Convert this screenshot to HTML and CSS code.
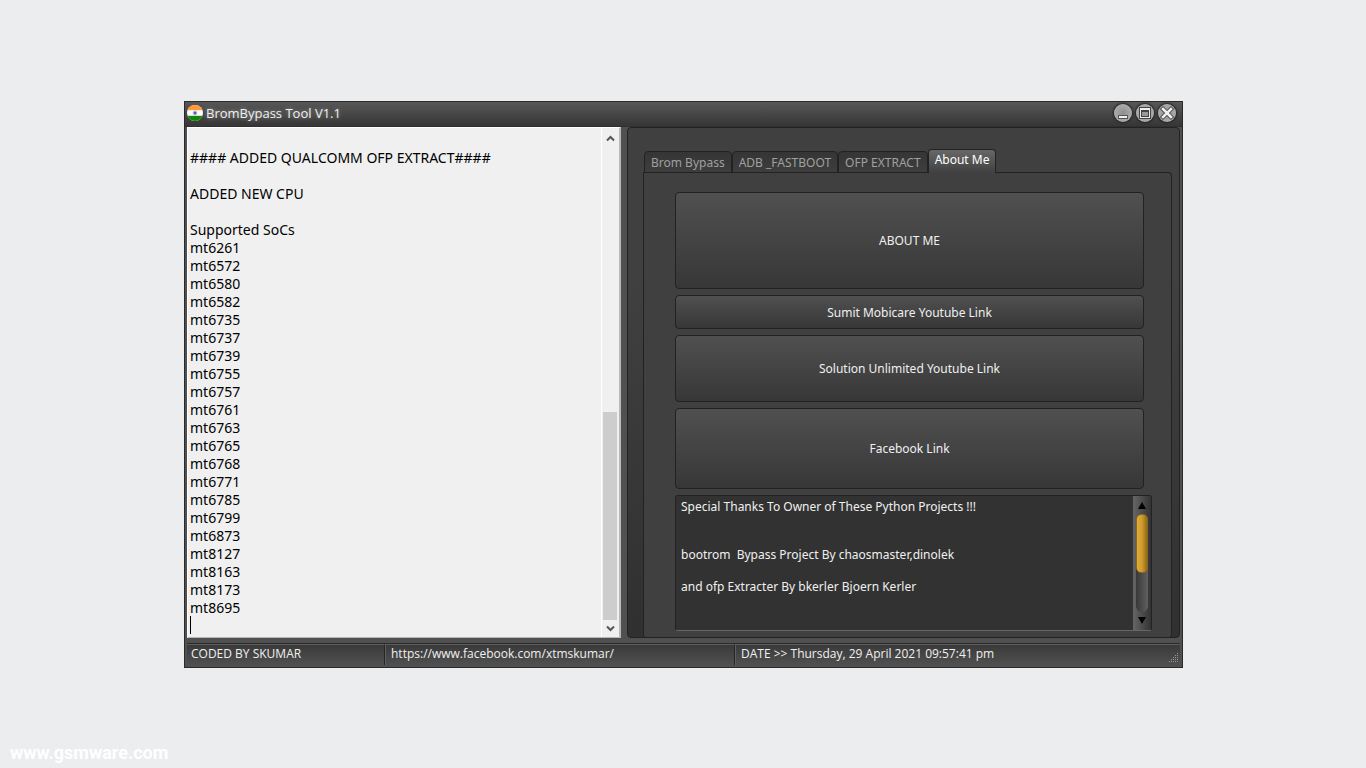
FILE: index.html
```html
<!DOCTYPE html>
<html lang="en">
<head>
<meta charset="utf-8">
<title>BromBypass Tool V1.1</title>
<link rel="stylesheet" href="styles.css">
</head>
<body>
<main class="window">
  <header class="titlebar">
    <svg class="flag" viewBox="0 0 16 16" aria-hidden="true">
      <clipPath id="disc"><circle cx="8" cy="8" r="8"/></clipPath>
      <g clip-path="url(#disc)">
        <rect width="16" height="16" fill="#fff"/>
        <rect width="16" height="5.2" fill="#f93"/>
        <rect y="10.8" width="16" height="5.2" fill="#128807"/>
        <circle cx="8" cy="8" r="2.4" fill="#b9b9dd"/>
        <circle cx="8" cy="8" r="1.300" fill="#5c5ca8"/>
      </g>
    </svg>
    <h1 class="title">BromBypass Tool V1.1</h1>
    <div class="controls">
      <button class="control" type="button" aria-label="Minimize"><svg viewBox="0 0 18 18"><rect x="4.500" y="11.500" width="9" height="3" fill="#f0f0f0" stroke="#555" stroke-width="1"/></svg></button>
      <button class="control" type="button" aria-label="Maximize"><svg viewBox="0 0 18 18"><rect x="3" y="3" width="12" height="12" fill="#444"/><rect x="4" y="4" width="10" height="10" fill="#eee"/><rect x="5" y="6" width="8" height="7" fill="#444"/><rect x="6" y="8" width="6" height="4" fill="#999"/></svg></button>
      <button class="control" type="button" aria-label="Close"><svg viewBox="0 0 18 18"><path d="M5 5l8 8M13 5l-8 8" stroke="#4a4a4a" stroke-width="4.400" stroke-linecap="square"/><path d="M5 5l8 8M13 5l-8 8" stroke="#f0f0f0" stroke-width="2.500" stroke-linecap="square"/></svg></button>
    </div>
  </header>

  <div class="content">
    <section class="log">
      <textarea class="log-text" aria-label="Log" readonly spellcheck="false">

#### ADDED QUALCOMM OFP EXTRACT####

ADDED NEW CPU

Supported SoCs
mt6261
mt6572
mt6580
mt6582
mt6735
mt6737
mt6739
mt6755
mt6757
mt6761
mt6763
mt6765
mt6768
mt6771
mt6785
mt6799
mt6873
mt8127
mt8163
mt8173
mt8695
</textarea>
      <span class="caret"></span>
      <div class="scroll-light">
        <svg viewBox="0 0 9 7"><path d="M1 5.500l3.500-3.500 3.500 3.500" fill="none" stroke="#555" stroke-width="2"/></svg>
        <div class="track-light"><div class="thumb-light"></div></div>
        <svg viewBox="0 0 9 7"><path d="M1 1.500l3.500 3.500 3.500-3.500" fill="none" stroke="#555" stroke-width="2"/></svg>
      </div>
    </section>

    <section class="panel">
      <div class="tabs" role="tablist">
        <button class="tab" type="button" role="tab">Brom Bypass</button>
        <button class="tab" type="button" role="tab">ADB _FASTBOOT</button>
        <button class="tab" type="button" role="tab">OFP EXTRACT</button>
        <button class="tab active" type="button" role="tab" aria-selected="true">About Me</button>
      </div>
      <div class="page" role="tabpanel">
        <div class="actions">
          <button class="action" type="button">ABOUT ME</button>
          <button class="action" type="button">Sumit Mobicare Youtube Link</button>
          <button class="action" type="button">Solution Unlimited Youtube Link</button>
          <button class="action" type="button">Facebook Link</button>
        </div>
        <div class="memo">
          <textarea class="memo-text" aria-label="Credits" readonly spellcheck="false">Special Thanks To Owner of These Python Projects !!!


bootrom  Bypass Project By chaosmaster,dinolek

and ofp Extracter By bkerler Bjoern Kerler
</textarea>
          <div class="scroll-dark">
            <svg viewBox="0 0 8 7"><path d="M4 0l4 7h-8z"/></svg>
            <div class="track-dark"><div class="thumb-dark"></div></div>
            <svg viewBox="0 0 8 7"><path d="M4 7l4-7h-8z"/></svg>
          </div>
        </div>
      </div>
    </section>
  </div>

  <footer class="status">
    <span class="cell">CODED BY SKUMAR</span>
    <span class="cell">https://www.facebook.com/xtmskumar/</span>
    <span class="cell">DATE &gt;&gt; Thursday, 29 April 2021 09:57:41 pm</span>
    <svg class="grip" viewBox="0 0 10 10"><path d="M9.500 0v10M7.500 2v8M5.500 4v6M3.500 6v4M1.500 8v2" stroke="#999" stroke-width="1" stroke-dasharray="1 1"/></svg>
  </footer>
</main>
<span class="watermark">www.gsmware.com</span>
</body>
</html>
```
FILE: styles.css
```css
* {
  box-sizing: border-box;
}

body {
  margin: 0;
  min-height: 100vh;
  padding: 101px 183px 100px 184px;
  display: flex;
  position: relative;
  background: #ebedef;
  font-family: "Noto Sans", sans-serif;
  font-size: 12px;
  color: #f0f0f0;
}

button,
textarea {
  font: inherit;
  color: inherit;
  margin: 0;
}

.window {
  flex: 1;
  display: flex;
  flex-direction: column;
  min-width: 0;
  padding: 0 2px 2px;
  background: #505050;
  border: 1px solid #2a2a2a;
}

.titlebar {
  display: flex;
  align-items: center;
  gap: 3px;
  height: 25px;
  margin: 0 -2px;
  padding: 0 6px 2px 2px;
  background: linear-gradient(#575757, #363636);
  border-bottom: 1px solid #303030;
}

.flag {
  width: 16px;
  height: 16px;
}

.title {
  flex: 1;
  margin: 0;
  font: 13px "Open Sans", sans-serif;
  text-shadow: 0 0 4px #999;
}

.controls {
  display: flex;
  gap: 4px;
}

.control {
  width: 18px;
  height: 18px;
  padding: 0;
  border: 0;
  border-radius: 50%;
  background: radial-gradient(#8f8f8f, #b8b8b8);
  box-shadow: 0 0 2px 1px #222;
}

.control svg {
  display: block;
}

.content {
  flex: 1;
  display: grid;
  grid-template-columns: 434fr 553fr;
  gap: 6px;
  min-height: 0;
}

.log {
  position: relative;
  display: flex;
  background: #f0f0f0;
  border: 1px solid #fff;
  border-right: 2px solid #b9b9b9;
  border-bottom-color: #b9b9b9;
}

.log-text {
  flex: 1;
  min-width: 0;
  padding: 3px 2px;
  border: 0;
  outline: 0;
  resize: none;
  overflow: hidden;
  background: transparent;
  color: #000;
  font-size: 14px;
  line-height: 18px;
}

.caret {
  position: absolute;
  left: 2px;
  bottom: 3px;
  width: 1px;
  height: 18px;
  background: #000;
}

.scroll-light {
  display: flex;
  flex-direction: column;
  align-items: center;
  width: 18px;
  padding: 7px 2px 5px 1px;
  gap: 5px;
  border-left: 1px solid #fff;
}

.scroll-light svg {
  width: 9px;
  height: 7px;
}

.track-light {
  flex: 1;
  align-self: stretch;
  display: flex;
  align-items: flex-end;
}

.thumb-light {
  width: 100%;
  height: 44%;
  background: #cdcdcd;
}

.panel {
  display: flex;
  flex-direction: column;
  min-width: 0;
  padding: 21px 7px 0 15px;
  border: 1px solid #222;
  border-radius: 4px;
  background: linear-gradient(#404040 30%, #303030);
}

.tabs {
  display: flex;
  align-items: flex-end;
  margin: 0 0 -1px 1px;
  z-index: 1;
}

.tab {
  height: 22px;
  padding: 0 6px;
  border: 1px solid #222;
  border-radius: 4px 4px 0 0;
  background: linear-gradient(#353535, #3e3e3e);
  color: #a0a0a0;
  white-space: nowrap;
}

.tab.active {
  height: 24px;
  padding: 0 6px 4px;
  border-bottom: 0;
  background: linear-gradient(#686868, #404040);
  color: #fff;
}

.page {
  flex: 1;
  display: flex;
  flex-direction: column;
  gap: 6px;
  padding: 19px 19px 6px 31px;
  border: 1px solid #222;
  border-bottom: 0;
  border-radius: 0 4px 3px 3px;
  background: #404040;
}

.actions {
  flex: 300;
  display: grid;
  grid-template-rows: 97fr 34fr 67fr 81fr;
  gap: 6px;
  margin-right: 8px;
}

.action {
  border: 1px solid #222;
  border-radius: 4px;
  background: linear-gradient(#505050, #373737);
}

.memo {
  flex: 135;
  display: flex;
  border: 1px solid #222;
  border-bottom-color: #666;
  border-radius: 3px;
  background: #323232;
}

.memo-text {
  flex: 1;
  min-width: 0;
  min-height: 0;
  padding: 3px 5px;
  border: 0;
  outline: 0;
  resize: none;
  overflow: hidden;
  background: transparent;
  line-height: 16px;
}

.scroll-dark {
  display: flex;
  flex-direction: column;
  align-items: center;
  gap: 5px;
  width: 18px;
  padding: 6px 2px;
  background: linear-gradient(90deg, #666, #333);
}

.scroll-dark svg {
  width: 8px;
  height: 7px;
}

.track-dark {
  flex: 1;
  width: 12px;
  border-radius: 6px;
  background: linear-gradient(90deg, #383838, #606060);
}

.thumb-dark {
  height: 60%;
  border-radius: 5px;
  border: 1px solid #8b6820;
  background: linear-gradient(90deg, #e0ad3c, #cf9c2c 50%, #916b18);
}

.status {
  position: relative;
  display: grid;
  grid-template-columns: 197fr 350fr 446fr;
  height: 22px;
  margin-top: 5px;
  border-top: 1px solid #2a2a2a;
  background: linear-gradient(#393939, #505050);
  font-family: "Open Sans", sans-serif;
  line-height: 18px;
}

.cell {
  padding-left: 4px;
  border-top: 1px solid #5e5e5e;
  white-space: nowrap;
}

.cell + .cell {
  padding-left: 6px;
  border-left: 1px solid #262626;
  box-shadow: inset 1px 0 #5e5e5e;
}

.grip {
  position: absolute;
  right: 2px;
  bottom: 2px;
  width: 10px;
  height: 10px;
}

.watermark {
  position: absolute;
  left: 10px;
  bottom: 5px;
  font: bold 18px/20px Roboto, sans-serif;
  color: #fff;
}
```
